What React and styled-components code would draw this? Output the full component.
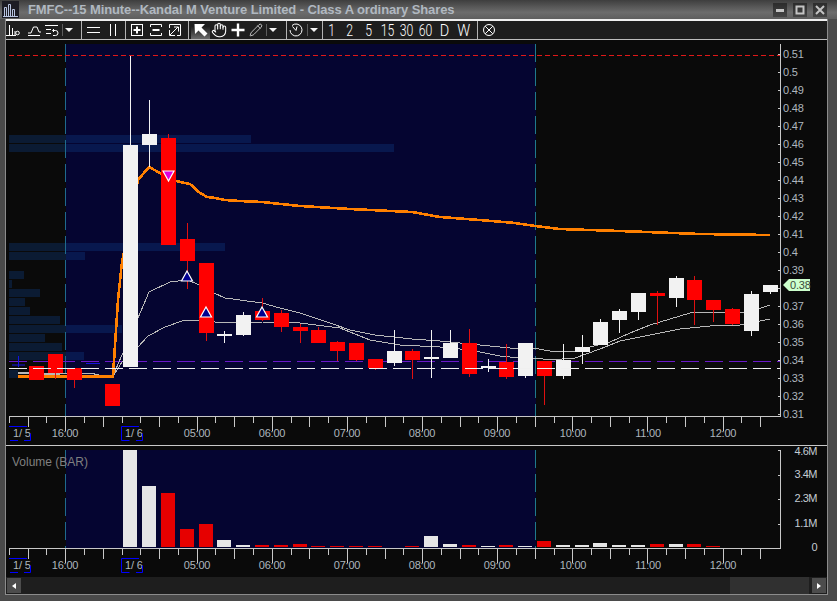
import React from 'react';
import styled, { createGlobalStyle } from 'styled-components';
import { Hand, Pencil } from 'lucide-react';

const GlobalStyle = createGlobalStyle`
  html, body { margin: 0; padding: 0; background: #4a4a4a; }
`;

const Frame = styled.div`
  width: 837px;
  height: 601px;
  background: #4a4a4a;
  display: flex;
  flex-direction: column;
  overflow: hidden;
  font-family: "Liberation Sans", Arial, sans-serif;
`;
const TitleBar = styled.div`
  height: 19px;
  flex: none;
  display: flex;
  align-items: center;
  padding: 0 10px 0 2px;
  background: linear-gradient(#3e3e3e, #6c6c6c 65%, #5e5e5e);
`;
const AppIcon = styled.div`
  width: 17px;
  height: 17px;
  background: #1c1c24;
  display: flex;
  align-items: center;
  justify-content: center;
`;
const Title = styled.div`
  flex: 1;
  margin-left: 9px;
  color: #b0b8c0;
  font-size: 13px;
  font-weight: 700;
  letter-spacing: -0.1px;
  white-space: nowrap;
`;
const WinButtons = styled.div`
  display: flex;
  gap: 6px;
`;
const WinButton = styled.div`
  width: 14px;
  height: 14px;
  background: linear-gradient(#2c2c2c, #444);
  display: flex;
  align-items: center;
  justify-content: center;
`;
const Inner = styled.div`
  flex: none;
  margin: 0 9px 0 5px;
  height: 575px;
  border: 1px solid #8c8c8c;
  border-top: none;
  background: #0a0a0a;
  display: flex;
  flex-direction: column;
`;
const Toolbar = styled.div`
  height: 18px;
  flex: none;
  display: flex;
  align-items: stretch;
  background: #1e1e1e;
  border-top: 2px solid #f0f0f0;
  border-bottom: 1px solid #bdbdbd;
`;
const ToolButton = styled.div`
  width: ${(p) => p.$w || 18}px;
  margin-left: ${(p) => p.$ml || 0}px;
  flex: none;
  display: flex;
  align-items: center;
  justify-content: center;
  color: #fff;
  background: ${(p) => (p.$active ? 'linear-gradient(#1e1e1e 30%, #6a6a6a)' : 'transparent')};
`;
const ToolText = styled.span`
  font-family: Roboto, "Liberation Sans", sans-serif;
  font-weight: 300;
  font-size: 17px;
  line-height: 18px;
  color: #fff;
  display: inline-block;
  transform: scaleX(${(p) => p.$sx || 0.72});
`;
const Sep = styled.div`
  width: 1px;
  flex: none;
  margin-left: ${(p) => p.$ml || 0}px;
  background: ${(p) => (p.$thin ? '#5c5c5c' : '#b4b4b4')};
  margin-top: ${(p) => (p.$thin ? 3 : 0)}px;
  margin-bottom: ${(p) => (p.$thin ? 3 : 0)}px;
`;
const DropArrow = styled.div`
  width: 0;
  height: 0;
  border-left: 4px solid transparent;
  border-right: 4px solid transparent;
  border-top: 4px solid #f4f4f4;
`;
const PricePanel = styled.svg`
  display: block;
  flex: none;
  border-bottom: 1px solid #c8c8c8;
`;
const VolumePanel = styled.svg`
  display: block;
  flex: none;
`;
const AxisText = styled.text`
  font-family: "Liberation Sans", Arial, sans-serif;
  font-size: 11px;
  letter-spacing: -0.2px;
  fill: #aeb6be;
`;
const ScaleText = styled(AxisText)`
  letter-spacing: -0.5px;
  fill: #c4ccd4;
  text-anchor: end;
`;
const TagText = styled(AxisText)`
  fill: #3a4a3a;
`;
const PanelName = styled.text`
  font-family: "Liberation Sans", Arial, sans-serif;
  font-size: 12px;
  fill: #808080;
`;
const ScrollBar = styled.div`
  flex: 1;
  display: flex;
  padding: 1px;
  background: #1e1e1e;
`;
const ScrollButton = styled.div`
  width: 14px;
  background: #4c4c4c;
  display: flex;
  align-items: center;
  justify-content: center;
`;
const ScrollTrack = styled.div`
  flex: 1;
  display: flex;
  justify-content: flex-end;
  padding-right: 3px;
  margin: -1px 0;
`;
const ScrollThumb = styled.div`
  width: 79px;
  background: #303030;
`;
const ScrollArrow = styled.div`
  width: 0;
  height: 0;
  border-top: 3px solid transparent;
  border-bottom: 3px solid transparent;
  ${(p) => (p.$right ? 'border-left: 4px solid #fff;' : 'border-right: 4px solid #fff;')}
`;

const R = '#ff0000';
const W = '#f2f2f2';

// x, body top, body bottom, wick top, wick bottom, colour
const candles = [
  [29, 366, 380, 366, 380, R], [48, 354, 373, 354, 379, R], [67, 368, 380, 368, 388, R],
  [105, 384, 406, 384, 406, R], [123, 145, 367, 56, 367, W], [142, 134, 145, 100, 167, W],
  [161, 138, 245, 134, 245, R], [180, 239, 261, 223, 289, R], [199, 263, 333, 263, 341, R],
  [217, 334, 336, 331, 343, W], [236, 315, 335, 312, 336, W], [255, 311, 320, 298, 321, R],
  [274, 313, 327, 310, 332, R], [293, 327, 331, 324, 343, R], [311, 330, 343, 327, 343, R],
  [330, 342, 351, 341, 361, R], [349, 343, 360, 343, 361, R], [368, 359, 368, 359, 370, R],
  [387, 351, 363, 330, 366, W], [405, 351, 360, 349, 379, R], [424, 357, 359, 330, 378, W],
  [443, 343, 358, 330, 358, W], [462, 343, 374, 329, 377, R], [481, 366, 368, 359, 372, W],
  [499, 362, 377, 344, 379, R], [518, 343, 376, 343, 378, W], [537, 361, 376, 361, 405, R],
  [556, 360, 376, 344, 379, W], [575, 347, 352, 335, 364, W], [593, 322, 345, 319, 345, W],
  [612, 311, 320, 309, 333, W], [631, 293, 312, 293, 320, W], [650, 293, 296, 291, 325, R],
  [669, 278, 298, 276, 307, W], [687, 280, 300, 276, 325, R], [706, 300, 310, 300, 322, R],
  [725, 309, 324, 308, 325, R], [744, 294, 331, 291, 336, W], [763, 285, 292, 285, 294, W],
];

// y, right edge
const profile = [
  [135, 251], [144, 394], [243, 225], [252, 85], [271, 24], [280, 12], [289, 40], [298, 25],
  [307, 30], [316, 60], [325, 122], [334, 45], [343, 62], [352, 84], [370, 18],
];

const orange = '18,376.5 113,376.5 115,345 118,300 122,262 138,180 149,167 160,173 176,181 185,183 190,184 200,193 207,197 215,198 225,200 240,201 262,202 300,206 350,209 412,212 440,217 480,220 515,223 535,226 560,229 620,231 700,234 770,235';
const maUpper = '18,372 60,374 90,373 112,378 122,355 138,318 149,292 170,282 187,280 200,285 214,293 225,298 240,300 262,303 280,308 300,313 330,323 350,330 375,335 412,339 440,341 480,345 500,347 520,349 533,348 550,351 575,351 590,347 610,342 630,333 650,325 670,319 680,316 690,313 700,312 720,312 740,313 755,310 770,305';
const maLower = '18,373 60,375 90,375 112,378 122,362 138,347 148,336 165,327 185,320 200,320 215,322 262,322 300,323 340,328 370,340 400,345 440,347 470,350 500,356 520,358 535,358 550,360 575,358 600,349 620,341 650,335 680,329 700,327 720,325 740,325 760,321 770,319';

// x, top of the bar, colour
const VR = '#e60000';
const VW = '#e6e6e6';
const volumes = [
  [123, 450, VW], [142, 486, VW], [161, 493, VR], [180, 529, VR], [199, 524, VR], [217, 540, VW],
  [236, 545, VW], [255, 545, VR], [274, 545, VR], [293, 544, VR], [311, 546, VR], [330, 546, VR],
  [349, 546, VR], [368, 546, VR], [405, 546, VR], [424, 536, VW], [443, 544, VW], [462, 545, VR],
  [481, 546, VW], [499, 545, VR], [518, 546, VW], [537, 541, VR], [556, 545, VW], [575, 545, VW],
  [593, 543, VW], [612, 545, VW], [631, 545, VW], [650, 544, VR], [669, 544, VW], [687, 544, VR],
  [706, 546, VR],
];

const prices = ['0.51', '0.5', '0.49', '0.48', '0.47', '0.46', '0.45', '0.44', '0.43', '0.42', '0.41', '0.4', '0.39', '', '0.37', '0.36', '0.35', '0.34', '0.33', '0.32', '0.31'];
const hours = [[65, '16:00'], [197, '05:00'], [272, '06:00'], [347, '07:00'], [422, '08:00'], [497, '09:00'], [573, '10:00'], [648, '11:00'], [723, '12:00']];
const firstTicks = [7, 11, 7, 15, 7, 11, 7, 7, 11, 7];
const tickLengths = [15, 7, 11, 7];
const ticks = Array.from({ length: 41 }, (_, i) => ({
  x: Math.round(8.9 + 18.78 * i),
  len: i < 10 ? firstTicks[i] : tickLengths[(i - 10) % 4],
}));

function TimeAxis({ y }) {
  const text = y + 21;
  return (
    <g>
      <rect x="9" y={y} width="772" height="1" fill="#c8c8c8" shapeRendering="crispEdges" />
      {ticks.map((t) => (
        <rect key={t.x} x={t.x} y={y} width="1" height={t.len} fill="#c8c8c8" shapeRendering="crispEdges" />
      ))}
      <AxisText x="13" y={text}>1/ 5</AxisText>
      <AxisText x="125" y={text}>1/ 6</AxisText>
      <path d={`M9 ${y + 10.5}h18M10 ${y + 24.5}h8M24 ${y + 24.5}h6.5v-7`} stroke="#0000ff" fill="none" strokeWidth="1" />
      <path d={`M139 ${y + 10.5}h-17.5v14h8M136 ${y + 24.5}h6.5v-7`} stroke="#0000ff" fill="none" strokeWidth="1" />
      {hours.map(([x, label]) => (
        <AxisText key={label} x={x} y={text} textAnchor="middle">{label}</AxisText>
      ))}
    </g>
  );
}

function Triangle({ x, y, down }) {
  const d = down
    ? `M${x - 5} ${y}h11l-5.5 10z`
    : `M${x} ${y}l5.5 10h-11z`;
  return <path d={d} fill={down ? '#e000e0' : '#000090'} stroke="#fff" strokeWidth="1.2" />;
}

function PriceChart() {
  return (
    <PricePanel width="821" height="405" viewBox="6 40 821 405">
      <rect x="66" y="44" width="470" height="372" fill="#050531" />
      {profile.map(([y, right]) => (
        <rect key={y} x="9" y={y} width={right - 9} height="8" fill="#10408c" fillOpacity="0.32" />
      ))}
      <line x1="65.5" x2="65.5" y1="44" y2="416" stroke="#1f6a8c" strokeDasharray="18 6" />
      <line x1="535.5" x2="535.5" y1="44" y2="416" stroke="#1f7a8c" strokeDasharray="18 6" />
      <line x1="9" x2="780" y1="55.5" y2="55.5" stroke="#e01818" strokeDasharray="5 3" />
      <line x1="9" x2="780" y1="361.5" y2="361.5" stroke="#6a18c8" strokeDasharray="18 6" />
      <path d="M18.5 356v11M12 365h13M86 363.5h14" stroke="#1414e0" fill="none" />
      <polyline points={maUpper} fill="none" stroke="#b8b8b8" shapeRendering="crispEdges" />
      <polyline points={maLower} fill="none" stroke="#b8b8b8" shapeRendering="crispEdges" />
      <polyline points={orange} fill="none" stroke="#ff8000" strokeWidth="2.6" shapeRendering="crispEdges" />
      {candles.map(([x, top, bottom, wickTop, wickBottom, color]) => (
        <g key={x} shapeRendering="crispEdges">
          <rect x={x + 7} y={wickTop} width="1" height={wickBottom - wickTop} fill={color === R ? '#e01010' : '#f2f2f2'} />
          <rect x={x} y={top} width="15" height={bottom - top} fill={color} />
        </g>
      ))}
      <line x1="9" x2="780" y1="368.5" y2="368.5" stroke="#f0f0f0" strokeDasharray="18 6" />
      <Triangle x={168} y={171} down />
      <Triangle x={187} y={271} />
      <Triangle x={206} y={307} />
      <Triangle x={262} y={307} />
      <rect x="780" y="44" width="1" height="373" fill="#c8c8c8" shapeRendering="crispEdges" />
      {prices.map((p, i) => (
        <g key={i}>
          <rect x="778" y={54 + i * 18} width="3" height="1" fill="#c8c8c8" shapeRendering="crispEdges" />
          {p && <AxisText x="783" y={58 + i * 18}>{p}</AxisText>}
        </g>
      ))}
      <path d="M783 285l6-6h21v12h-21z" fill="#ccffcc" />
      <TagText x="790" y="289">0.38</TagText>
      <TimeAxis y={416} />
    </PricePanel>
  );
}

function VolumeChart() {
  return (
    <VolumePanel width="821" height="131" viewBox="6 446 821 131">
      <rect x="66" y="450" width="470" height="98" fill="#050531" />
      <line x1="65.5" x2="65.5" y1="450" y2="548" stroke="#1f6a8c" strokeDasharray="18 6" />
      <line x1="535.5" x2="535.5" y1="450" y2="548" stroke="#1f7a8c" strokeDasharray="18 6" />
      <PanelName x="12" y="466">Volume (BAR)</PanelName>
      {volumes.map(([x, top, color]) => (
        <rect key={x} x={x} y={top} width="14" height={547 - top} fill={color} shapeRendering="crispEdges" />
      ))}
      <rect x="780" y="450" width="1" height="99" fill="#c8c8c8" shapeRendering="crispEdges" />
      <path d="M778 450.5h3M778 475.5h3M778 499.5h3M778 524.5h3" stroke="#c8c8c8" />
      <ScaleText x="817" y="455">4.6M</ScaleText>
      <ScaleText x="817" y="478">3.4M</ScaleText>
      <ScaleText x="817" y="502">2.3M</ScaleText>
      <ScaleText x="817" y="527">1.1M</ScaleText>
      <ScaleText x="817" y="551">0</ScaleText>
      <TimeAxis y={548} />
    </VolumePanel>
  );
}

const Glyph = ({ w = 14, h = 14, children }) => (
  <svg width={w} height={h} viewBox={`0 0 ${w} ${h}`} fill="none" stroke="currentColor" strokeWidth="1">
    {children}
  </svg>
);

const tools = [
  { label: '1', w: 17 },
  { label: '2', w: 19 },
  { label: '5', w: 19 },
  { label: '15', w: 19 },
  { label: '30', w: 19 },
  { label: '60', w: 19 },
  { label: 'D', w: 19, sx: 0.85 },
  { label: 'W', w: 19, sx: 0.85 },
];

function ToolRow() {
  return (
    <Toolbar>
      <ToolButton $w={14}>
        <Glyph><path d="M3.5 2v10M6.5 5v7M9 8v4M0 12.5h10" /><circle cx="11.5" cy="10" r="1.8" /></Glyph>
      </ToolButton>
      <ToolButton $ml={5}>
        <Glyph><path d="M1 10h3l2.5-6h3.5l2 5h2M1 12.5h12" /></Glyph>
      </ToolButton>
      <ToolButton>
        <Glyph><path d="M0 2.5h13M1 6.5h5M1 10.5h5" /><path d="M9 6l-1.5 1.5L9 9M8 7.5h2.5a2.5 2.5 0 0 1 0 5H8" /></Glyph>
      </ToolButton>
      <Sep $thin $ml={1} />
      <ToolButton $w={12}><DropArrow /></ToolButton>
      <Sep $ml={6} />
      <ToolButton $ml={2}>
        <Glyph w={13} h={12}><path d="M0 3.5h13M0 8.5h13" /></Glyph>
      </ToolButton>
      <ToolButton $ml={1} $w={19}>
        <Glyph w={8} h={14}><path d="M1.5 1v12M6.5 1v12" /></Glyph>
      </ToolButton>
      <Sep $ml={3} />
      <ToolButton $ml={2}>
        <Glyph><rect x="1.5" y="1.5" width="11" height="11" /><path d="M7 3.5v7M3.5 7h7" strokeWidth="2" /></Glyph>
      </ToolButton>
      <ToolButton $ml={1}>
        <Glyph><path d="M1.5 4V1.5H12.5V4M1.5 10v2.5H12.5V10" /><path d="M3.5 7h7" strokeWidth="2" /></Glyph>
      </ToolButton>
      <ToolButton $ml={1}>
        <Glyph><path d="M1.5 5V1.5H12.5V12.5H9M1.5 7v5.5H7" /><path d="M2 12l8-8M6 4h4.5v4.5" /></Glyph>
      </ToolButton>
      <Sep $ml={4} />
      <ToolButton $ml={2} $w={19} $active>
        <Glyph><path d="M0.5 1h10.5L7.5 4.5l6 6-3 3-6-6L1 11z" fill="#fff" stroke="none" /></Glyph>
      </ToolButton>
      <ToolButton>
        <Hand size={16} strokeWidth={1.6} />
      </ToolButton>
      <ToolButton $ml={1}>
        <Glyph><path d="M7 0.5v13M0.5 7h13" strokeWidth="2.4" /></Glyph>
      </ToolButton>
      <ToolButton>
        <Pencil size={14} strokeWidth={1.2} />
      </ToolButton>
      <Sep $thin $ml={1} />
      <ToolButton $w={12}><DropArrow /></ToolButton>
      <Sep $ml={7} />
      <ToolButton>
        <Glyph><path d="M3 2.5A6 6 0 1 1 1 7" /><path d="M3.5 3.5L7 7.5l1-4" /></Glyph>
      </ToolButton>
      <Sep $thin $ml={2} />
      <ToolButton $w={12}><DropArrow /></ToolButton>
      <Sep $ml={2} />
      {tools.map((t) => (
        <ToolButton key={t.label} $w={t.w}>
          <ToolText $sx={t.sx}>{t.label}</ToolText>
        </ToolButton>
      ))}
      <Sep $ml={4} />
      <ToolButton $ml={3} $w={16}>
        <Glyph><circle cx="7" cy="7" r="5.5" /><path d="M3.2 3.2l7.6 7.6M10.8 3.2l-7.6 7.6" /></Glyph>
      </ToolButton>
    </Toolbar>
  );
}

export default function App() {
  return (
    <Frame>
      <GlobalStyle />
      <TitleBar>
        <AppIcon>
          <svg width="15" height="15" viewBox="0 0 15 15" fill="none" stroke="#b8c4e0">
            <path d="M1.5 14V5.5h2V14M5.5 14V2.5h2V14M9.5 14V7.5h2V14M0 14.5h15" />
          </svg>
        </AppIcon>
        <Title>FMFC--15 Minute--Kandal M Venture Limited - Class A ordinary Shares</Title>
        <WinButtons>
          <WinButton><svg width="10" height="10"><rect x="1" y="4" width="8" height="3" fill="#c4c4c4" /></svg></WinButton>
          <WinButton><svg width="10" height="10"><rect x="1.5" y="1.5" width="7" height="7" fill="none" stroke="#c4c4c4" strokeWidth="2" /></svg></WinButton>
          <WinButton><svg width="10" height="10"><path d="M1 1l8 8M9 1l-8 8" stroke="#c4c4c4" strokeWidth="2" /></svg></WinButton>
        </WinButtons>
      </TitleBar>
      <Inner>
        <ToolRow />
        <PriceChart />
        <VolumeChart />
        <ScrollBar>
          <ScrollButton><ScrollArrow /></ScrollButton>
          <ScrollTrack><ScrollThumb /></ScrollTrack>
          <ScrollButton><ScrollArrow $right /></ScrollButton>
        </ScrollBar>
      </Inner>
    </Frame>
  );
}
